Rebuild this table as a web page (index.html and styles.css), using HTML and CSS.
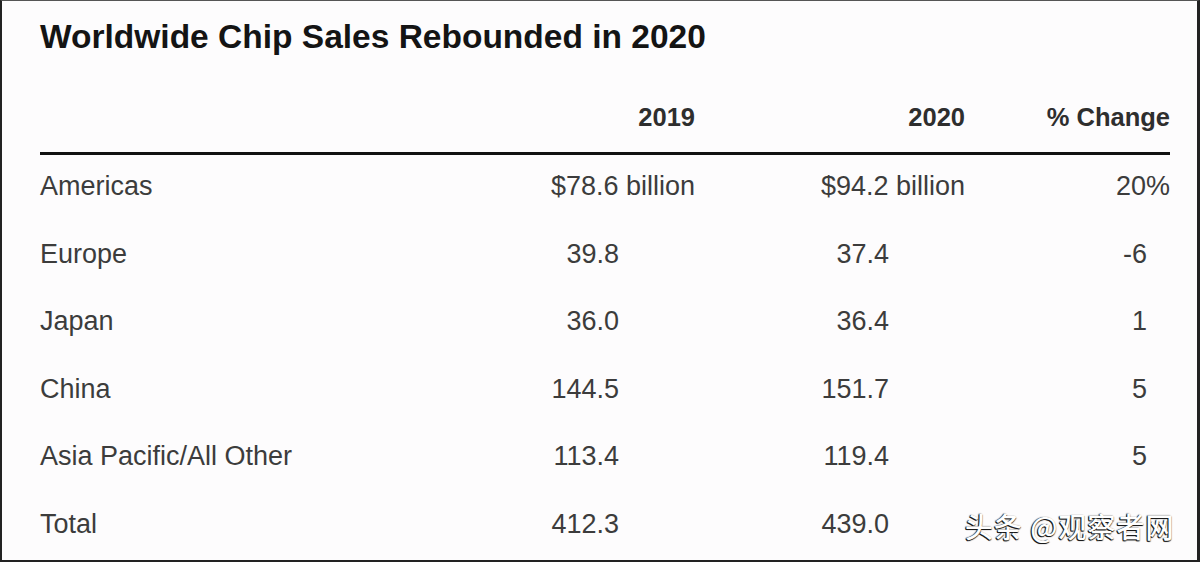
FILE: index.html
```html
<!DOCTYPE html>
<html lang="en">
<head>
<meta charset="utf-8">
<title>Worldwide Chip Sales Rebounded in 2020</title>
<link rel="stylesheet" href="styles.css">
</head>
<body>
<div class="frame">
  <h1 class="title">Worldwide Chip Sales Rebounded in 2020</h1>
  <div class="table">
    <div class="row head">
      <div class="cell label"></div>
      <div class="cell num">2019</div>
      <div class="cell num">2020</div>
      <div class="cell num">% Change</div>
    </div>
    <div class="row">
      <div class="cell label">Americas</div>
      <div class="cell num">$78.6 billion</div>
      <div class="cell num">$94.2 billion</div>
      <div class="cell num">20%</div>
    </div>
    <div class="row">
      <div class="cell label">Europe</div>
      <div class="cell num pad">39.8</div>
      <div class="cell num pad">37.4</div>
      <div class="cell num pct">-6</div>
    </div>
    <div class="row">
      <div class="cell label">Japan</div>
      <div class="cell num pad">36.0</div>
      <div class="cell num pad">36.4</div>
      <div class="cell num pct">1</div>
    </div>
    <div class="row">
      <div class="cell label">China</div>
      <div class="cell num pad">144.5</div>
      <div class="cell num pad">151.7</div>
      <div class="cell num pct">5</div>
    </div>
    <div class="row">
      <div class="cell label">Asia Pacific/All Other</div>
      <div class="cell num pad">113.4</div>
      <div class="cell num pad">119.4</div>
      <div class="cell num pct">5</div>
    </div>
    <div class="row">
      <div class="cell label">Total</div>
      <div class="cell num pad">412.3</div>
      <div class="cell num pad">439.0</div>
      <div class="cell num pct"></div>
    </div>
  </div>
  <div class="watermark">头条 @观察者网</div>
</div>
</body>
</html>
```
FILE: styles.css
```css
html, body {
  margin: 0;
  padding: 0;
  background: #fdfcfd;
}
.frame {
  position: relative;
  box-sizing: border-box;
  width: 1200px;
  height: 562px;
  overflow: hidden;
  background: #fdfcfd;
  border-top: 1px solid #555;
  border-left: 2px solid #222;
  border-right: 3px solid #222;
  border-bottom: 2px solid #222;
  padding: 16px 27px 0 38px;
  font-family: "Liberation Sans", Arial, sans-serif;
}
.title {
  margin: 0;
  font-size: 33.5px;
  line-height: 40px;
  font-weight: 700;
  color: #141414;
}
.table {
  margin-top: 45px;
}
.row {
  display: grid;
  grid-template-columns: 385px 270px 270px 205px;
  height: 67.5px;
  box-sizing: border-box;
  padding-top: 16px;
  font-size: 27px;
  line-height: 30px;
  color: #3c3c3c;
}
.row.head {
  height: auto;
  padding-top: 0;
  padding-bottom: 20px;
  border-bottom: 3px solid #111;
  font-size: 25.5px;
  font-weight: 700;
  color: #2e2e2e;
}
.cell {
  white-space: nowrap;
}
.num {
  text-align: right;
}
.pad {
  padding-right: 76px;
}
.pct {
  padding-right: 23px;
}
.watermark {
  position: absolute;
  left: 963px;
  top: 507px;
  font-family: "Noto Sans CJK SC", "Noto Sans", sans-serif;
  font-size: 28px;
  font-weight: 500;
  line-height: 36px;
  letter-spacing: 1px;
  color: #ffffff;
  text-shadow: -1px 1px 0 #1a1a1a, -1px 0 1px #333, 0 1px 1px #333;
}
```
